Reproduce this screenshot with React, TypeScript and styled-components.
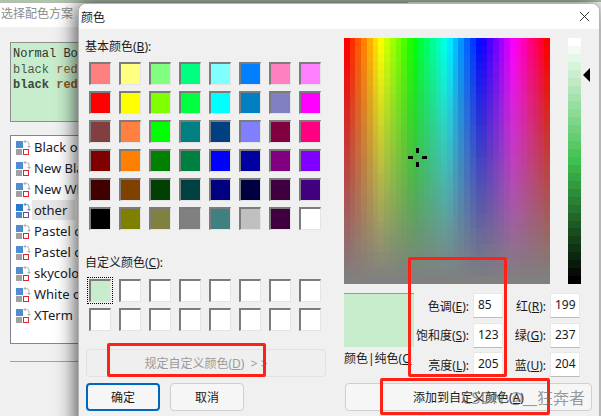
import React from 'react';
import styled, { createGlobalStyle } from 'styled-components';

const basicColors = [
  '#ff8080', '#ffff80', '#80ff80', '#00ff80', '#80ffff', '#0080ff', '#ff80c0', '#ff80ff',
  '#ff0000', '#ffff00', '#80ff00', '#00ff40', '#00ffff', '#0080c0', '#8080c0', '#ff00ff',
  '#804040', '#ff8040', '#00ff00', '#008080', '#004080', '#8080ff', '#800040', '#ff0080',
  '#800000', '#ff8000', '#008000', '#008040', '#0000ff', '#0000a0', '#800080', '#8000ff',
  '#400000', '#804000', '#004000', '#004040', '#000080', '#000040', '#400040', '#400080',
  '#000000', '#808000', '#808040', '#808080', '#408080', '#c0c0c0', '#400040', '#ffffff',
];

const schemes = [
  'Black on White',
  'New Black',
  'New White',
  'other',
  'Pastel on Dark',
  'Pastel on Light',
  'skycolor',
  'White on Black',
  'XTerm',
];

const fields = [
  ['色调', 'E', '85', '红', 'R', '199'],
  ['饱和度', 'S', '123', '绿', 'G', '237'],
  ['亮度', 'L', '205', '蓝', 'U', '204'],
];

const COLS = 36;
const ROWS = 31;

export default function App() {
  return (
    <Desktop>
      <GlobalStyle />
      <TopStrip />
      <BackWindow>
        <BackTitle>选择配色方案</BackTitle>
        <SchemePreview>
          <div>Normal Bold</div>
          <LightLine>
            black <RedWord>red</RedWord>
          </LightLine>
          <BoldLine>
            black <RedWord>red</RedWord>
          </BoldLine>
        </SchemePreview>
        <SchemeList>
          {schemes.map((name) => (
            <SchemeRow key={name}>
              <SchemeIcon active={name === 'other'} />
              <SchemeName $active={name === 'other'}>{name}</SchemeName>
            </SchemeRow>
          ))}
        </SchemeList>
        <Separator />
      </BackWindow>

      <Dialog>
        <DialogTitle>
          <span>颜色</span>
          <CloseIcon />
        </DialogTitle>
        <DialogBody>
          <LeftPane>
            <SectionLabel>
              基本颜色(<u>B</u>):
            </SectionLabel>
            <SwatchGrid>
              {basicColors.map((color, index) => (
                <Swatch key={index} $color={color} />
              ))}
            </SwatchGrid>
            <CustomLabel>
              自定义颜色(<u>C</u>):
            </CustomLabel>
            <CustomGrid>
              {Array.from({ length: 16 }).map((_, index) => (
                <Swatch key={index} $color={index === 0 ? '#c7edcc' : '#ffffff'} $selected={index === 0} />
              ))}
            </CustomGrid>
            <DefineButton disabled>
              规定自定义颜色(<u>D</u>) &nbsp;&gt; &gt;
            </DefineButton>
            <ButtonRow>
              <DialogButton $primary>确定</DialogButton>
              <DialogButton>取消</DialogButton>
            </ButtonRow>
          </LeftPane>

          <RightPane>
            <PickerRow>
              <Spectrum />
              <LumBar />
              <LumArrow />
            </PickerRow>
            <ValuesRow>
              <PreviewColumn>
                <ColorPreview />
                <PreviewLabel>
                  颜色|纯色(<u>O</u>
                </PreviewLabel>
              </PreviewColumn>
              <FieldGrid>
                {fields.map(([a, aKey, aValue, b, bKey, bValue]) => (
                  <React.Fragment key={a}>
                    <FieldLabel>
                      {a}(<u>{aKey}</u>):
                    </FieldLabel>
                    <FieldInput>{aValue}</FieldInput>
                    <FieldLabel>
                      {b}(<u>{bKey}</u>):
                    </FieldLabel>
                    <FieldInput>{bValue}</FieldInput>
                  </React.Fragment>
                ))}
              </FieldGrid>
            </ValuesRow>
            <AddButton>
              添加到自定义颜色(<u>A</u>)
            </AddButton>
          </RightPane>
        </DialogBody>
      </Dialog>

      <RedMark $left={107} $top={343} $width={159} $height={34} />
      <RedMark $left={408} $top={257} $width={99} $height={120} />
      <RedMark $left={380} $top={378} $width={170} $height={37} />
      <Watermark>CSDN @__狂奔者</Watermark>
    </Desktop>
  );
}

function Spectrum() {
  const cellW = 206 / COLS;
  const cellH = 246 / ROWS;
  return (
    <SpectrumSvg viewBox="0 0 206 246" shapeRendering="crispEdges">
      {Array.from({ length: ROWS }).map((_, row) =>
        Array.from({ length: COLS }).map((_, col) => (
          <rect
            key={`${row}-${col}`}
            x={col * cellW}
            y={row * cellH}
            width={cellW + 0.5}
            height={cellH + 0.5}
            fill={`hsl(${(col / (COLS - 1)) * 360}, ${100 - (row / (ROWS - 1)) * 100}%, 50%)`}
          />
        )),
      )}
      <rect x="72" y="110" width="3" height="5" fill="#000" />
      <rect x="72" y="124" width="3" height="5" fill="#000" />
      <rect x="64" y="118" width="5" height="3" fill="#000" />
      <rect x="78" y="118" width="5" height="3" fill="#000" />
    </SpectrumSvg>
  );
}

function LumBar() {
  const cellH = 246 / ROWS;
  return (
    <LumSvg viewBox="0 0 13 246" shapeRendering="crispEdges">
      {Array.from({ length: ROWS }).map((_, row) => (
        <rect
          key={row}
          x="0"
          y={row * cellH}
          width="13"
          height={cellH + 0.5}
          fill={`hsl(127.5, 51%, ${100 - (row / (ROWS - 1)) * 100}%)`}
        />
      ))}
    </LumSvg>
  );
}

function LumArrow() {
  return (
    <ArrowSvg viewBox="0 0 8 14">
      <path d="M7 0v14L0 7z" fill="#000" />
    </ArrowSvg>
  );
}

function CloseIcon() {
  return (
    <CloseSvg viewBox="0 0 12 12">
      <path d="M1 1l10 10M11 1L1 11" stroke="#222" strokeWidth="1" fill="none" />
    </CloseSvg>
  );
}

function SchemeIcon({ active }: { active: boolean }) {
  const top = active ? '#2a78c8' : '#4f8cd0';
  const bottom = active ? '#4a88c8' : '#a0a0a0';
  const box = active ? '#6a4f9a' : '#e0242c';
  const arrow = active ? '#5c8fc4' : '#b0b0b0';
  return (
    <IconSvg viewBox="0 0 16 16">
      <rect x="0" y="2" width="7" height="7" fill={top} />
      <rect x="0" y="10" width="6" height="6" fill={bottom} />
      <rect x="7.5" y="10.5" width="5" height="5" fill="none" stroke={box} strokeWidth="1" />
      <path d="M8 2.5h2.5a2.5 2.5 0 0 1 2.5 2.5v3" fill="none" stroke={arrow} strokeWidth="1" />
      <path d="M9.5 .5L7.5 2.5l2 2M11 7h4l-2 2z" fill={arrow} stroke="none" />
    </IconSvg>
  );
}

const GlobalStyle = createGlobalStyle`
  html, body {
    margin: 0;
    padding: 0;
    background: #fff;
    font-family: "Noto Sans", "Noto Sans CJK SC", sans-serif;
  }
  u {
    text-underline-offset: 1px;
  }
`;

const Desktop = styled.div`
  position: relative;
  width: 601px;
  height: 416px;
  overflow: hidden;
  background: #fff;
  font-family: "Noto Sans", "Noto Sans CJK SC", sans-serif;
  font-size: 12px;
  color: #1a1a1a;
`;

const TopStrip = styled.div`
  height: 2px;
  background: #a9c8a6;
`;

const BackWindow = styled.div`
  width: 412px;
  height: 414px;
  background: #f0f0f0;
  border-top: 1px solid #b8b8b8;
  border-top-right-radius: 6px;
  box-sizing: border-box;
`;

const BackTitle = styled.div`
  height: 24px;
  line-height: 22px;
  padding-left: 1px;
  background: #fff;
  color: #8c8c8c;
  font-size: 12px;
`;

const SchemePreview = styled.div`
  width: 290px;
  height: 80px;
  box-sizing: border-box;
  margin: 15px 0 0 10px;
  padding: 4px 2px;
  background: #c7edcc;
  border: 1px solid #8f8f8f;
  font-family: "Liberation Mono", monospace;
  font-size: 12px;
  line-height: 15.5px;
  color: #333;
`;

const LightLine = styled.div`
  color: #4c5a4c;
`;

const BoldLine = styled.div`
  font-weight: bold;
  color: #3c463c;
`;

const RedWord = styled.span`
  color: #8f5a22;
`;

const SchemeList = styled.div`
  width: 290px;
  height: 209px;
  box-sizing: border-box;
  margin: 13px 0 0 10px;
  padding: 0 0 0 5px;
  background: #fff;
  border: 1px solid #82829a;
`;

const SchemeRow = styled.div`
  display: flex;
  align-items: center;
  gap: 2px;
  height: 21px;
`;

const IconSvg = styled.svg`
  width: 16px;
  height: 16px;
  flex: none;
`;

const SchemeName = styled.span<{ $active?: boolean }>`
  padding: 0 ${(p) => (p.$active ? '8px' : '0')} 0 ${(p) => (p.$active ? '2px' : '0')};
  margin-left: ${(p) => (p.$active ? '-2px' : '0')};
  line-height: 20px;
  font-size: 13px;
  color: #1a1a2a;
  background: ${(p) => (p.$active ? '#e6e6e6' : 'transparent')};
`;

const Separator = styled.div`
  width: 290px;
  margin: 17px 0 0 10px;
  border-top: 1px solid #a0a0a0;
`;

const Dialog = styled.div`
  position: absolute;
  left: 78px;
  top: 3px;
  width: 522px;
  height: 430px;
  box-sizing: border-box;
  background: #f0f0f0;
  border: 1px solid #b4b4b4;
  border-radius: 8px 8px 0 0;
  box-shadow: -2px 0 20px rgba(0, 0, 0, 0.7);
  overflow: hidden;
`;

const DialogTitle = styled.div`
  display: flex;
  align-items: center;
  justify-content: space-between;
  height: 25px;
  padding: 0 9px 0 2px;
  background: #fff;
  font-size: 12px;
`;

const CloseSvg = styled.svg`
  width: 11px;
  height: 11px;
`;

const DialogBody = styled.div`
  display: flex;
`;

const LeftPane = styled.div`
  width: 265px;
  flex: none;
  box-sizing: border-box;
  padding: 9px 0 0 6px;
`;

const SectionLabel = styled.div`
  height: 17px;
  line-height: 17px;
`;

const SwatchGrid = styled.div`
  display: grid;
  grid-template-columns: repeat(8, 22px);
  grid-auto-rows: 23px;
  column-gap: 8px;
  row-gap: 6px;
  margin: 7px 0 0 4px;
`;

const Swatch = styled.div<{ $color: string; $selected?: boolean }>`
  box-sizing: border-box;
  background: ${(p) => p.$color};
  border-style: solid;
  border-width: 2px 1px 1px 2px;
  border-color: #7c7c7c #e4e4e4 #e4e4e4 #7c7c7c;
  outline: ${(p) => (p.$selected ? '1px dotted #000' : 'none')};
  outline-offset: 1px;
`;

const CustomLabel = styled(SectionLabel)`
  margin-top: 24px;
`;

const CustomGrid = styled(SwatchGrid)`
  margin-top: 8px;
`;

const DialogButton = styled.button<{ $primary?: boolean }>`
  width: 74px;
  height: 28px;
  padding: 0;
  box-sizing: border-box;
  background: #f6f6f6;
  border: ${(p) => (p.$primary ? '2px solid #0067c0' : '1px solid #cfcfcf')};
  border-radius: 4px;
  color: #1a1a1a;
  font-family: inherit;
  font-size: 12px;
`;

const DefineButton = styled(DialogButton)`
  display: block;
  width: 240px;
  margin: 18px 0 0 1px;
  background: #efefef;
  border: 1px solid #e2e2e2;
  color: #9a9a9a;
`;

const ButtonRow = styled.div`
  display: flex;
  gap: 10px;
  margin: 6px 0 0 1px;
`;

const RightPane = styled.div`
  flex: none;
  padding-top: 9px;
`;

const PickerRow = styled.div`
  display: flex;
  align-items: flex-start;
`;

const SpectrumSvg = styled.svg`
  display: block;
  width: 206px;
  height: 246px;
  flex: none;
`;

const LumSvg = styled.svg`
  display: block;
  width: 13px;
  height: 246px;
  margin-left: 18px;
  flex: none;
`;

const ArrowSvg = styled.svg`
  width: 8px;
  height: 14px;
  margin: 30px 0 0 2px;
  flex: none;
`;

const ValuesRow = styled.div`
  display: flex;
  margin-top: 9px;
`;

const PreviewColumn = styled.div`
  width: 70px;
  flex: none;
`;

const ColorPreview = styled.div`
  height: 54px;
  background: #c7edcc;
  border-top: 1px solid #9a9a9a;
  box-sizing: border-box;
`;

const PreviewLabel = styled.div`
  height: 18px;
  margin-top: 3px;
  line-height: 18px;
  white-space: nowrap;
`;

const FieldGrid = styled.div`
  display: grid;
  grid-template-columns: 55px 30px 39px 30px;
  grid-auto-rows: 25px;
  column-gap: 4px;
  row-gap: 4.5px;
`;

const FieldLabel = styled.div`
  align-self: center;
  text-align: right;
  white-space: nowrap;
`;

const FieldInput = styled.div`
  box-sizing: border-box;
  padding-left: 4px;
  line-height: 22px;
  background: #fff;
  border: 1px solid #e8e8e8;
  border-bottom-color: #bcbcbc;
`;

const AddButton = styled(DialogButton)`
  display: block;
  width: 247px;
  margin: 6px 0 0 1px;
`;

const RedMark = styled.div<{ $left: number; $top: number; $width: number; $height: number }>`
  position: absolute;
  left: ${(p) => p.$left}px;
  top: ${(p) => p.$top}px;
  width: ${(p) => p.$width}px;
  height: ${(p) => p.$height}px;
  box-sizing: border-box;
  border: 3px solid #ff2016;
  border-radius: 2px;
`;

const Watermark = styled.div`
  position: absolute;
  right: 16px;
  top: 387px;
  font-size: 16px;
  line-height: 22px;
  white-space: nowrap;
  color: rgba(110, 110, 110, 0.7);
`;
